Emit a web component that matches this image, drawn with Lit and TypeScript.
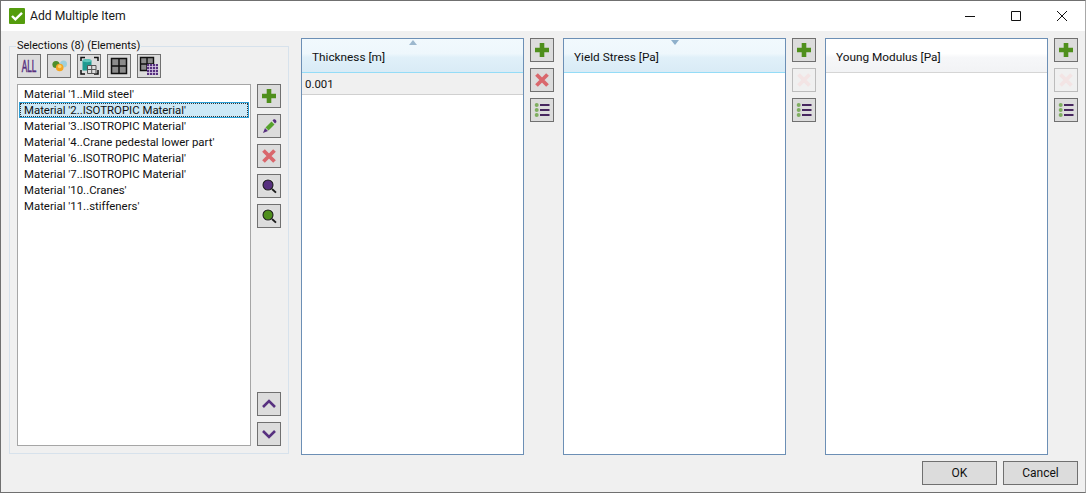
import { LitElement, html, css, svg } from "lit";
import { customElement } from "lit/decorators.js";

const G = "#4f8f1c", P = "#57307f", R = "#d9676c";
const ico = (c: unknown) => html`<svg class="ico" width="22" height="22" viewBox="0 0 22 22">${c}</svg>`;
const plus = ico(svg`<path d="M11 4v14M4 11h14" stroke="${G}" stroke-width="4.6" fill="none"/>`);
const cross = (col: string) => ico(svg`<path d="M5.5 5.5l11 11M16.5 5.5l-11 11" stroke="${col}" stroke-width="3.8" fill="none"/>`);
const pencil = ico(svg`<path d="M7.5 12.5l6-6 3 3-6 6z" fill="#55a22c"/><path d="M14.5 5.5l1.5-1.5 2 1 .5 2-1.5 1.5z" fill="${P}"/><path d="M7 13l3 3-5 2z" fill="${P}"/>`);
const glass = (col: string) => ico(svg`<circle cx="10" cy="10" r="6.6" fill="#e8e8e8"/><circle cx="10" cy="10" r="5" fill="${col}" stroke="#1c1c1c" stroke-width="1.1"/><path d="M14 14l4 3.6" stroke="#1c1c1c" stroke-width="1.9" fill="none"/>`);
const up = ico(svg`<path d="M5 14l6-6 6 6" stroke="${P}" stroke-width="2.6" fill="none"/>`);
const down = ico(svg`<path d="M5 8l6 6 6-6" stroke="${P}" stroke-width="2.6" fill="none"/>`);
const list = ico(svg`<g fill="#7fae60"><circle cx="5.7" cy="6" r="2"/><circle cx="5.7" cy="11" r="2"/><circle cx="5.7" cy="16" r="2"/></g><path d="M9 6h9.5M9 11h9.5M9 16h9.5" stroke="#47275f" stroke-width="2" fill="none"/>`);
const all = ico(svg`<text transform="translate(11 16.6) scale(.75 1.5)" text-anchor="middle" font-family="Liberation Sans" font-size="11" stroke="${P}" stroke-width=".4" fill="${P}">ALL</text>`);
const cubes = ico(svg`<circle cx="8" cy="9.5" r="3.6" fill="#4f8f2c"/><circle cx="15.5" cy="9" r="3.5" fill="#9fd0dc"/><circle cx="11.7" cy="12.5" r="3.8" fill="#f5a623"/><circle cx="11.7" cy="11.5" r="1.8" fill="#fbd36b"/>`);
const model = ico(svg`<path d="M3 6V2.5h4M16 2.5h4V6M3 15v4h4M20 15v4h-4" stroke="#111" stroke-width="1.5" fill="none"/><path d="M4.5 6c0-2.4 9-2.4 9 0v9.5h-9z" fill="#1f9a90"/><ellipse cx="9" cy="5.6" rx="4.5" ry="1.7" fill="#5cc4ba"/><path d="M9.5 10.5h8.5v8H9.5z" fill="#dedede" stroke="#555"/><path d="M13.7 10.5v8M9.5 14.5H18" stroke="#555"/>`);
const grid = ico(svg`<path d="M3.5 3.5h15v15h-15z" fill="#8b8b8b" stroke="#111" stroke-width="1.5"/><path d="M11 3.5v15M3.5 11h15" stroke="#111" stroke-width="1.5"/>`);
const gridFine = ico(svg`<path d="M2.5 2.5h13v13h-13z" fill="#8b8b8b" stroke="#111" stroke-width="1.4"/><path d="M9 2.5v13M2.5 9h13" stroke="#111" stroke-width="1.4"/><path d="M9 9h11v11H9z" fill="${P}"/><path d="M11.5 9v11M14.5 9v11M17.5 9v11M9 11.5h11M9 14.5h11M9 17.5h11" stroke="#d9cde6" stroke-width=".8"/>`);
const check = html`<svg class="app-ico" width="16" height="16" viewBox="0 0 16 16"><rect width="16" height="16" rx="1" fill="#549c0d"/><path d="M3 8l3.4 3.4L13 4.8" stroke="#fff" stroke-width="2.4" fill="none"/></svg>`;

const materials = [
  "Material '1..Mild steel'", "Material '2..ISOTROPIC Material'", "Material '3..ISOTROPIC Material'",
  "Material '4..Crane pedestal lower part'", "Material '6..ISOTROPIC Material'", "Material '7..ISOTROPIC Material'",
  "Material '10..Cranes'", "Material '11..stiffeners'",
];

@customElement("app-root")
export class AppRoot extends LitElement {
  static styles = css`
    :host { display: block; width: 1086px; height: 493px; font-family: Roboto, "Liberation Sans", sans-serif; font-size: 12px; color: #111; }
    * { box-sizing: border-box; }
    .win { width: 1086px; height: 493px; border: 1px solid #707070; border-right-color: #a8a8a8; background: #f0f0f0; display: flex; flex-direction: column; }
    .title { height: 30px; background: #fff; display: flex; align-items: center; padding-left: 8px; flex: none; }
    .app-ico { margin-right: 5px; flex: none; }
    .title-text { flex: 1; font-size: 12.2px; color: #1a1a1a; }
    .wbtn { width: 46px; height: 30px; display: flex; align-items: center; justify-content: center; }
    .main { display: flex; align-items: flex-start; padding: 7px 0 0 8px; flex: none; }
    .group { width: 280px; height: 408px; margin-top: 8px; border: 1px solid #d7e2ec; padding: 7px; display: flex; flex-direction: column; gap: 6px; margin-right: 12px; flex: none; position: relative; }
    .legend { position: absolute; left: 6px; top: -8px; line-height: 14px; padding: 0 1px; background: #f0f0f0; font-size: 11px; }
    .toolbar { display: flex; gap: 6px; height: 24px; flex: none; }
    .body { display: flex; gap: 6px; height: 362px; }
    .list { width: 234px; background: #fff; border: 1px solid #a6a6a6; padding: 1px; }
    .item { height: 16px; line-height: 16px; padding-left: 5px; white-space: nowrap; font-size: 11.4px; }
    .item.sel { background: #cce8f6; box-shadow: inset 0 0 0 1px #2b9fd8; outline: 1px dotted #333; outline-offset: -2px; }
    .side { display: flex; flex-direction: column; justify-content: space-between; width: 24px; }
    .stack { display: flex; flex-direction: column; gap: 6px; }
    .btn { width: 24px; height: 24px; background: #dcdcdc; border: 1px solid #707070; display: flex; align-items: center; justify-content: center; flex: none; }
    .btn.off { background: #f0f0f0; border-color: #bcbcbc; }
    .ico { display: block; flex: none; }
    .cols { display: flex; }
    .col { display: flex; gap: 6px; margin-right: 9px; }
    .col:last-child { margin-right: 0; }
    .panel { width: 223px; height: 417px; background: #fff; border: 1px solid #6c8fb5; }
    .head { height: 34px; padding-left: 10px; line-height: 36px; position: relative; white-space: nowrap; font-size: 11.8px; }
    .head.blue { background: linear-gradient(#f1f9fd 0, #eef7fc 44%, #e0f0f9 56%, #d9ebf6 100%); border-bottom: 1px solid #94dcf7; }
    .head.plain { background: linear-gradient(#fff 0, #fff 44%, #f6f7f9 56%, #f2f3f5 100%); border-bottom: 1px solid #d5d5d5; }
    .sort { position: absolute; left: 50%; top: 1px; margin-left: -4px; width: 8px; height: 5px; }
    .row { height: 22px; line-height: 22px; padding-left: 3px; background: #f0f0f0; border-bottom: 1px solid #d0d0d0; font-size: 11.4px; }
    .foot { display: flex; justify-content: flex-end; gap: 6px; padding: 6px 7px 0 0; }
    .pb { width: 75px; height: 24px; background: #dcdcdc; border: 1px solid #707070; display: flex; align-items: center; justify-content: center; font-size: 12px; }
  `;

  private panel(name: string, blue: boolean, sort: string, rows: string[], canDelete: boolean) {
    return html`<div class="col">
      <div class="panel">
        <div class="head ${blue ? "blue" : "plain"}">
          ${sort === "up" ? html`<svg class="sort" viewBox="0 0 8 5"><path d="M4 0l4 5H0z" fill="#9db8ce"/></svg>` : ""}
          ${sort === "down" ? html`<svg class="sort" viewBox="0 0 8 5"><path d="M4 5l4-5H0z" fill="#8fb0cb"/></svg>` : ""}
          ${name}
        </div>
        ${rows.map((r) => html`<div class="row">${r}</div>`)}
      </div>
      <div class="stack">
        <div class="btn">${plus}</div>
        <div class="btn ${canDelete ? "" : "off"}">${cross(canDelete ? R : "#f3e4e4")}</div>
        <div class="btn">${list}</div>
      </div>
    </div>`;
  }

  render() {
    return html`<div class="win">
      <div class="title">
        ${check}<span class="title-text">Add Multiple Item</span>
        <div class="wbtn"><svg width="10" height="10" viewBox="0 0 10 10"><path d="M0 5.5h10" stroke="#111"/></svg></div>
        <div class="wbtn"><svg width="10" height="10" viewBox="0 0 10 10"><path d="M.5.5h9v9h-9z" stroke="#111" fill="none"/></svg></div>
        <div class="wbtn"><svg width="10" height="10" viewBox="0 0 10 10"><path d="M0 0l10 10M10 0L0 10" stroke="#111" fill="none"/></svg></div>
      </div>
      <div class="main">
        <div class="group">
          <div class="legend">Selections (8) (Elements)</div>
          <div class="toolbar">
            ${[all, cubes, model, grid, gridFine].map((i) => html`<div class="btn">${i}</div>`)}
          </div>
          <div class="body">
            <div class="list">
              ${materials.map((m, i) => html`<div class="item ${i === 1 ? "sel" : ""}">${m}</div>`)}
            </div>
            <div class="side">
              <div class="stack">
                ${[plus, pencil, cross(R), glass(P), glass(G)].map((i) => html`<div class="btn">${i}</div>`)}
              </div>
              <div class="stack">
                <div class="btn">${up}</div>
                <div class="btn">${down}</div>
              </div>
            </div>
          </div>
        </div>
        <div class="cols">
          ${this.panel("Thickness [m]", true, "up", ["0.001"], true)}
          ${this.panel("Yield Stress [Pa]", true, "down", [], false)}
          ${this.panel("Young Modulus [Pa]", false, "", [], false)}
        </div>
      </div>
      <div class="foot">
        <div class="pb">OK</div>
        <div class="pb">Cancel</div>
      </div>
    </div>`;
  }
}
